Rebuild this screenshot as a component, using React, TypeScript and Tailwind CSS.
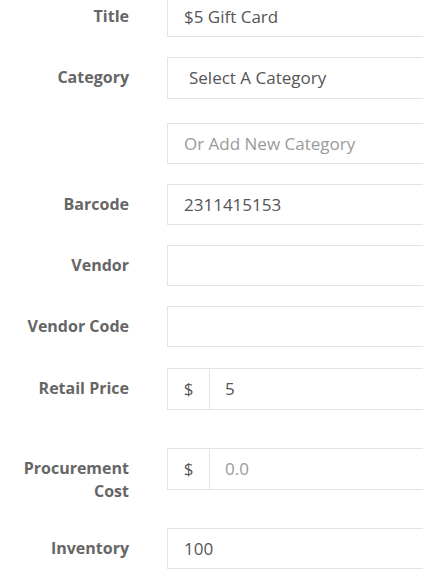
import React from "react";

type Field = {
  label: string;
  value?: string;
  placeholder?: string;
  kind?: "text" | "select" | "money";
  twoLine?: boolean;
  gap: string;
};

const fields: Field[] = [
  { label: "Title", value: "$5 Gift Card", gap: "mb-[20px]" },
  { label: "Category", value: "Select A Category", kind: "select", gap: "mb-[24px]" },
  { label: "", placeholder: "Or Add New Category", gap: "mb-[20px]" },
  { label: "Barcode", value: "2311415153", gap: "mb-[20px]" },
  { label: "Vendor", gap: "mb-[20px]" },
  { label: "Vendor Code", gap: "mb-[21px]" },
  { label: "Retail Price", value: "5", kind: "money", gap: "mb-[38px]" },
  { label: "Procurement Cost", placeholder: "0.0", kind: "money", twoLine: true, gap: "mb-[25px]" },
  { label: "Inventory", value: "100", gap: "mb-[20px]" },
];

function Control({ field }: { field: Field }) {
  const text = field.value ? (
    <span className="text-[#555555]">{field.value}</span>
  ) : field.placeholder ? (
    <span className="text-[#9a9a9a]">{field.placeholder}</span>
  ) : null;

  if (field.kind === "money") {
    return (
      <div className="flex h-[42px] w-[300px] border border-[#e4e4e4] bg-white text-[17px]">
        <div className="flex w-[42px] shrink-0 items-center justify-center border-r border-[#e4e4e4] text-[#555555]">
          $
        </div>
        <div className="flex items-center pl-[15px]">{text}</div>
      </div>
    );
  }

  return (
    <div
      className={
        "flex w-[300px] items-center border border-[#e4e4e4] bg-white text-[17px] " +
        (field.kind === "select" ? "h-[42px] pl-[21px]" : "h-[41px] pl-[16px]")
      }
    >
      {text}
    </div>
  );
}

export default function App() {
  return (
    <div
      className="h-[573px] w-[423px] overflow-hidden bg-white text-[16px]"
      style={{ fontFamily: '"Open Sans", sans-serif' }}
    >
      <div className="-mt-[4px] flex flex-col">
        {fields.map((f, i) => (
          <div key={i} className={"flex items-start " + f.gap}>
            <label className="w-[129px] shrink-0 pt-[9px] text-right font-bold leading-[23px] text-[#666666]">
              {f.twoLine ? (
                <>
                  Procurement
                  <br />
                  Cost
                </>
              ) : (
                f.label
              )}
            </label>
            <div className="ml-[38px]">
              <Control field={f} />
            </div>
          </div>
        ))}
      </div>
    </div>
  );
}
